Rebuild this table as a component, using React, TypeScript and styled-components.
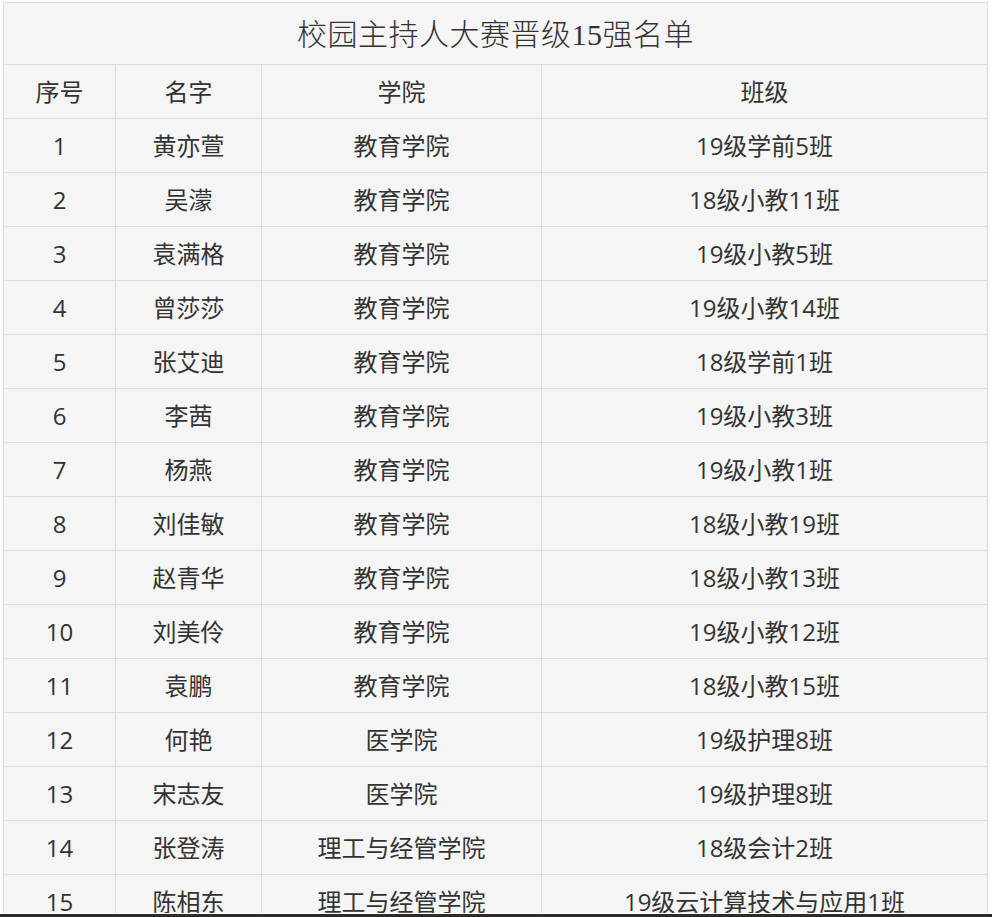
import React from 'react';
import styled, { createGlobalStyle } from 'styled-components';

const GlobalStyle = createGlobalStyle`
  html, body {
    margin: 0;
    padding: 0;
    background: #ffffff;
  }
`;

const Page = styled.div`
  height: 917px;
  display: flex;
  flex-direction: column;
  overflow: hidden;
`;

const Scroll = styled.div`
  flex: 1;
  overflow: hidden;
  padding: 2px 0 0 3px;
  border-bottom: 1px solid #ffffff;
`;

const BottomBar = styled.div`
  height: 3px;
  background: #2e2c2a;
`;

const Table = styled.table`
  width: 984px;
  table-layout: fixed;
  border-collapse: collapse;
  background: #f5f5f5;
  color: #333333;
  font-family: "Open Sans", "Noto Sans CJK SC", sans-serif;
  font-size: 24px;
`;

const TitleCell = styled.th`
  height: 57px;
  padding: 0 0 4px;
  border: 1px solid #dddddd;
  font-family: "Liberation Serif", "Noto Sans CJK SC", serif;
  font-size: 30px;
  font-weight: 300;
  letter-spacing: 0.5px;
  color: #333333;
`;

const Cell = styled.td`
  height: 53px;
  padding: 0;
  border: 1px solid #dddddd;
  text-align: center;
  vertical-align: middle;
  font-weight: 400;
  line-height: 1;
`;

const rows: [string, string, string, string][] = [
  ['1', '黄亦萱', '教育学院', '19级学前5班'],
  ['2', '吴濛', '教育学院', '18级小教11班'],
  ['3', '袁满格', '教育学院', '19级小教5班'],
  ['4', '曾莎莎', '教育学院', '19级小教14班'],
  ['5', '张艾迪', '教育学院', '18级学前1班'],
  ['6', '李茜', '教育学院', '19级小教3班'],
  ['7', '杨燕', '教育学院', '19级小教1班'],
  ['8', '刘佳敏', '教育学院', '18级小教19班'],
  ['9', '赵青华', '教育学院', '18级小教13班'],
  ['10', '刘美伶', '教育学院', '19级小教12班'],
  ['11', '袁鹏', '教育学院', '18级小教15班'],
  ['12', '何艳', '医学院', '19级护理8班'],
  ['13', '宋志友', '医学院', '19级护理8班'],
  ['14', '张登涛', '理工与经管学院', '18级会计2班'],
  ['15', '陈相东', '理工与经管学院', '19级云计算技术与应用1班'],
];

const App = () => {
  return (
    <Page>
      <GlobalStyle />
      <Scroll>
        <Table>
          <colgroup>
            <col style={{ width: 112 }} />
            <col style={{ width: 146 }} />
            <col style={{ width: 280 }} />
            <col style={{ width: 446 }} />
          </colgroup>
          <thead>
            <tr>
              <TitleCell colSpan={4}>校园主持人大赛晋级15强名单</TitleCell>
            </tr>
          </thead>
          <tbody>
            <tr>
              <Cell>序号</Cell>
              <Cell>名字</Cell>
              <Cell>学院</Cell>
              <Cell>班级</Cell>
            </tr>
            {rows.map((r) => (
              <tr key={r[0]}>
                {r.map((c, i) => (
                  <Cell key={i}>{c}</Cell>
                ))}
              </tr>
            ))}
          </tbody>
        </Table>
      </Scroll>
      <BottomBar />
    </Page>
  );
};

export default App;
